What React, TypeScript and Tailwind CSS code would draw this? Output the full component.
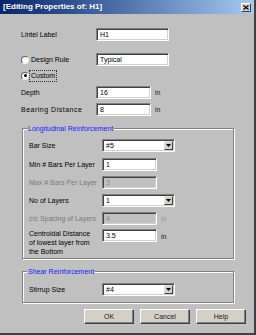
import React from "react";

const font = { fontFamily: '"Liberation Sans", Arial, sans-serif' };

function Input({ value, w, disabled }: { value: string; w: string; disabled?: boolean }) {
  return (
    <div
      className={`${w} h-[13px] border border-t-[#808080] border-l-[#808080] border-b-white border-r-white shadow-[inset_1px_1px_0_#404040,inset_-1px_-1px_0_#d4d0c8] flex items-center pl-[3px] text-[7px] leading-none ${
        disabled ? "bg-[#c0c0c0] text-[#8a8a8a]" : "bg-white text-black"
      }`}
    >
      {value}
    </div>
  );
}

function Combo({ value }: { value: string }) {
  return (
    <div className="w-[73px] h-[13px] border border-t-[#808080] border-l-[#808080] border-b-white border-r-white shadow-[inset_1px_1px_0_#404040,inset_-1px_-1px_0_#d4d0c8] bg-white flex items-stretch p-[1px]">
      <div className="flex-1 flex items-center pl-[2px] text-[7px] leading-none text-black">{value}</div>
      <div className="w-[9px] bg-[#d4d0c8] border border-t-[#e8e8e8] border-l-[#e8e8e8] border-b-[#404040] border-r-[#404040] flex items-center justify-center">
        <svg width="5" height="3" viewBox="0 0 5 3">
          <path d="M0 0H5L2.5 3Z" fill="#000" />
        </svg>
      </div>
    </div>
  );
}

function Row({ label, children, labelW, mt, disabled, unit, unitDisabled, labelClass }: any) {
  return (
    <div className={`flex items-center ${mt}`}>
      <div className={`${labelW} text-[7px] leading-none ${disabled ? "text-[#7a7a7a]" : "text-black"} ${labelClass ?? ""}`}>{label}</div>
      {children}
      {unit && (
        <div className={`ml-[4px] text-[7px] leading-none ${unitDisabled ? "text-[#9a9a9a]" : "text-[#202020]"}`}>in</div>
      )}
    </div>
  );
}

function Radio({ checked }: { checked?: boolean }) {
  return (
    <div className="w-[8px] h-[8px] shrink-0 rounded-full bg-white border border-t-[#606060] border-l-[#606060] border-b-[#f0f0f0] border-r-[#f0f0f0] flex items-center justify-center">
      {checked && <div className="w-[3px] h-[3px] rounded-full bg-black" />}
    </div>
  );
}

function Group({ title, children, h, mt }: any) {
  return (
    <div className={`relative ${mt} ml-[1px] w-[212px] ${h} border border-[#808080] shadow-[inset_1px_1px_0_#ffffff,1px_1px_0_#ffffff]`}>
      <div className="absolute left-[4px] top-[-5px] bg-[#c0c0c0] px-[1px] text-[7px] leading-[9px] text-[#1a1aff]">{title}</div>
      {children}
    </div>
  );
}

function Button({ label }: { label: string }) {
  return (
    <div className="w-[50px] h-[15px] bg-[#d4d0c8] border border-t-white border-l-white border-b-[#404040] border-r-[#404040] shadow-[inset_-1px_-1px_0_#808080] flex items-center justify-center text-[7px] leading-none text-[#202020]">
      {label}
    </div>
  );
}

export default function App() {
  return (
    <div style={font} className="w-[256px] h-[335px] bg-[#c0c0c0] border-r-2 border-b-2 border-r-[#404040] border-b-[#404040] overflow-hidden">
      <div className="h-[14px] bg-gradient-to-r from-[#0a246a] to-[#a6caf0] flex items-center pl-[3px] pr-[3px]">
        <div className="text-[8px] font-bold text-white leading-none flex-1">[Editing Properties of: H1]</div>
        <div className="w-[10px] h-[9px] bg-[#d4d0c8] border border-t-white border-l-white border-b-[#404040] border-r-[#404040] flex items-center justify-center">
          <svg width="6" height="5" viewBox="0 0 6 5">
            <path d="M0.5 0.5L5.5 4.5M5.5 0.5L0.5 4.5" stroke="#000" strokeWidth="1.2" />
          </svg>
        </div>
      </div>
      <div className="pl-[21px] flex flex-col">
        <Row label="Lintel Label" labelW="w-[75px]" mt="mt-[14px]">
          <Input value="H1" w="w-[73px]" />
        </Row>
        <Row
          label={
            <div className="flex items-center gap-[2px]">
              <Radio />
              <span>Design Rule</span>
            </div>
          }
          labelW="w-[75px]"
          mt="mt-[12px]"
        >
          <Input value="Typical" w="w-[73px]" />
        </Row>
        <div className="mt-[4px] h-[11px] flex items-center gap-[1px]">
          <Radio checked />
          <span className="outline-1 outline-dotted outline-[#333] px-[1px] py-[1px] text-[7px] leading-[8px] text-black">Custom</span>
        </div>
        <Row label="Depth" labelW="w-[75px]" mt="mt-[5px]" unit>
          <Input value="16" w="w-[55px]" />
        </Row>
        <Row label="Bearing Distance" labelW="w-[75px]" mt="mt-[4px]" unit labelClass="tracking-[0.5px]">
          <Input value="8" w="w-[55px]" />
        </Row>
        <Group title="Longitudinal Reinforcement" h="h-[131px]" mt="mt-[12px]">
          <div className="pl-[6px] pt-[10px] flex flex-col">
            <Row label="Bar Size" labelW="w-[73px]" mt="mt-0">
              <Combo value="#5" />
            </Row>
            <Row label="Min # Bars Per Layer" labelW="w-[73px]" mt="mt-[6px]">
              <Input value="1" w="w-[55px]" />
            </Row>
            <Row label="Max # Bars Per Layer" labelW="w-[73px]" mt="mt-[5px]" disabled>
              <Input value="3" w="w-[55px]" disabled />
            </Row>
            <Row label="No of Layers" labelW="w-[73px]" mt="mt-[5px]">
              <Combo value="1" />
            </Row>
            <Row label="c/c Spacing of Layers" labelW="w-[73px]" mt="mt-[5px]" disabled unit unitDisabled>
              <Input value="4" w="w-[55px]" disabled />
            </Row>
            <div className="flex items-start mt-[4px]">
              <div className="w-[73px] text-[7px] leading-[9px] text-black">
                Centroidal Distance
                <br />
                of lowest layer from
                <br />
                the Bottom
              </div>
              <Input value="3.5" w="w-[55px]" />
              <div className="ml-[4px] mt-[4px] text-[7px] leading-none text-[#202020]">in</div>
            </div>
          </div>
        </Group>
        <Group title="Shear Reinforcement" h="h-[32px]" mt="mt-[12px]">
          <div className="pl-[6px] pt-[11px]">
            <Row label="Stirrup Size" labelW="w-[73px]" mt="mt-0">
              <Combo value="#4" />
            </Row>
          </div>
        </Group>
        <div className="mt-[6px] flex gap-[6px] pl-[63px]">
          <Button label="OK" />
          <Button label="Cancel" />
          <Button label="Help" />
        </div>
      </div>
    </div>
  );
}
